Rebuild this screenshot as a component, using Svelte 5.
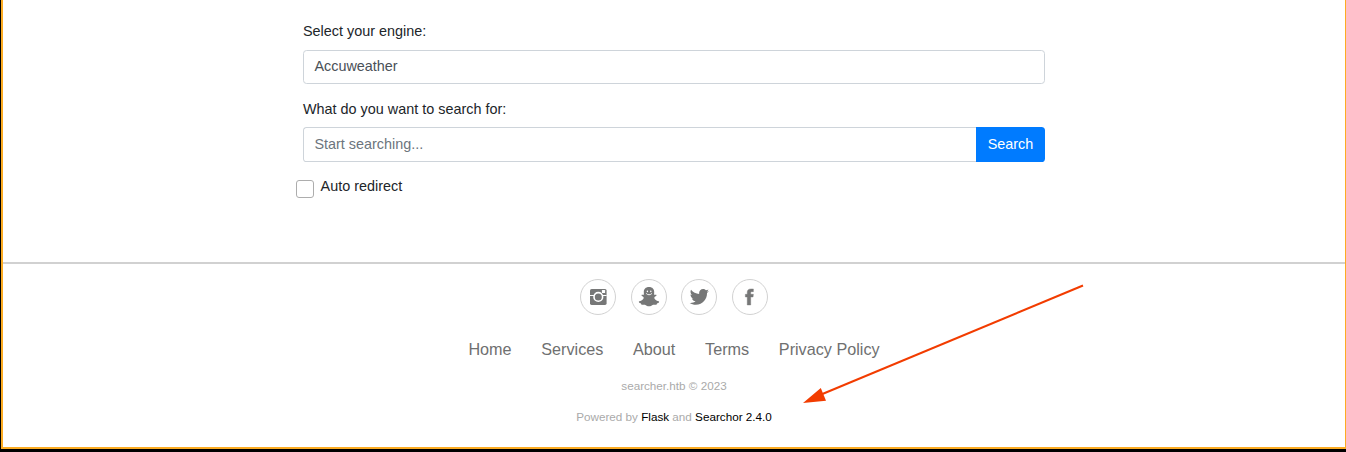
<script>
  const links = ['Home', 'Services', 'About', 'Terms', 'Privacy Policy'];
</script>

<div class="window">
  <main>
    <form>
      <label for="engine">Select your engine:</label>
      <div class="control select" id="engine">Accuweather</div>
      <label class="second" for="query">What do you want to search for:</label>
      <div class="group">
        <input id="query" class="control" type="text" placeholder="Start searching..." />
        <button type="button">Search</button>
      </div>
      <div class="check"><span class="box"></span><span>Auto redirect</span></div>
    </form>
  </main>
  <footer>
    <div class="social">
      <span class="circle">
        <svg viewBox="0 0 36 36">
          <rect x="10" y="9.900" width="16.600" height="16" rx="1.600" />
          <path class="gap" d="M10 16.500h4M22.200 16.500h4.400" />
          <circle class="ring" cx="18.300" cy="17.900" r="4.300" />
          <rect class="hole" x="21.900" y="11.100" width="3.200" height="3" rx=".5" />
        </svg>
      </span>
      <span class="circle">
        <svg viewBox="0 0 36 36">
          <path d="M18 8c-3.400 0-5.300 2.300-5.200 5.100l.1 2.700c-.9.300-2-.5-2.400.3-.4 1 1.900 1.500 2.200 2.300.2 1.500-1.900 3.200-4.300 3.900-.9.300-.6 1.300.3 1.600 1.800.6 1.200.6 1.700 1.700.5.600 2.700-.3 4 .3 1.200.7 2 1.300 3.600 1.300s2.400-.6 3.600-1.300c1.300-.6 3.500.3 4-.3.5-1.100-.1-1.100 1.700-1.700.9-.3 1.200-1.300.3-1.600-2.400-.7-4.500-2.400-4.300-3.900.3-.8 2.600-1.300 2.200-2.300-.4-.8-1.500 0-2.400-.3l.1-2.700C23.300 10.300 21.400 8 18 8z" />
          <ellipse class="hole" cx="16.400" cy="12.300" rx=".7" ry=".9" />
          <ellipse class="hole" cx="19.800" cy="12.300" rx=".7" ry=".9" />
          <path class="smile" d="M15.200 14.400c1.200 1.800 4.500 1.800 5.700 0" />
        </svg>
      </span>
      <span class="circle">
        <svg viewBox="0 0 36 36">
          <path transform="translate(7.900 7.500) scale(.0408)" d="M492 109.500c-17.400 7.700-36 12.900-55.600 15.300 20-12 35.400-31 42.600-53.600-18.700 11.100-39.400 19.200-61.500 23.500C399.800 75.800 374.600 64 346.800 64c-53.500 0-96.800 43.400-96.800 96.900 0 7.600.8 15 2.500 22.100-80.500-4-151.900-42.600-199.600-101.300-8.300 14.300-13.100 31-13.100 48.700 0 33.600 17.200 63.300 43.200 80.700-16-.4-31-4.800-44-12.100v1.200c0 47 33.400 86.100 77.700 95-8.100 2.200-16.700 3.400-25.500 3.400-6.200 0-12.300-.6-18.200-1.800 12.300 38.500 48.100 66.500 90.500 67.300-33.100 26-74.900 41.500-120.300 41.500-7.800 0-15.500-.5-23.100-1.400C62.800 432 113.800 448 168.500 448 346.600 448 444 300.300 444 172.200c0-4.200-.1-8.400-.3-12.500C462.600 146 479 129 492 109.500z" />
        </svg>
      </span>
      <span class="circle">
        <svg viewBox="0 0 36 36">
          <path transform="translate(6.700 7.300) scale(.0417)" stroke="#767777" stroke-width="10" d="M288 192v-38.100c0-17.200 3.800-25.900 30.500-25.900H352V64h-55.900c-68.500 0-91.100 31.400-91.100 85.300V192h-45v64h45v192h83V256h56.400l7.600-64h-64z" />
        </svg>
      </span>
    </div>
    <nav>
      {#each links as link}<span>{link}</span>{/each}
    </nav>
    <p class="copy">searcher.htb © 2023</p>
    <p class="powered">Powered by <b>Flask</b> and <b>Searchor 2.4.0</b></p>
  </footer>
  <svg class="arrow" viewBox="0 0 1346 452">
    <line x1="1083" y1="285.500" x2="820" y2="395" />
    <path d="M803 403l17.800-15 5.200 12.800z" />
  </svg>
</div>

<style>
  :global(body) { margin: 0; background: #000; }
  .window {
    position: relative;
    box-sizing: border-box;
    width: 1345px;
    height: 449px;
    margin-left: 1px;
    border: solid #fcac23;
    border-width: 0 1px 2px 2px;
    background: #fff;
    color: #212529;
    font: 14.4px/21.6px "Liberation Sans", Arial, sans-serif;
  }
  main { box-sizing: border-box; height: 262px; padding-top: 21px; }
  form { width: 742px; margin-left: 300px; }
  label { display: block; height: 22px; margin-bottom: 7px; }
  label.second { margin: 15px 0 6px; }
  .control {
    box-sizing: border-box;
    width: 100%;
    height: 34px;
    margin: 0;
    padding: 5px 10.400px;
    border: 1px solid #ced4da;
    border-radius: 3.600px;
    background: #fff;
    color: #495057;
    font: inherit;
  }
  .group { display: flex; height: 35px; }
  .group .control { flex: 1; width: auto; min-width: 0; height: 35px; padding: 4px 10.400px 6px; border-right: 0; border-radius: 3.600px 0 0 3.600px; }
  .control::placeholder { color: #6c757d; opacity: 1; }
  button {
    box-sizing: border-box;
    width: 69px;
    padding: 0;
    border: 0;
    border-radius: 0 3.600px 3.600px 0;
    background: #007bff;
    color: #fff;
    font: inherit;
  }
  .check { display: flex; gap: 6.600px; margin: 14px 0 0 -7px; }
  .box { box-sizing: border-box; width: 18px; height: 18px; margin-top: 4px; border: 1px solid #adadad; border-radius: 3px; }
  footer {
    display: flex;
    flex-direction: column;
    align-items: center;
    border-top: 2px solid #d1d1d1;
    padding-top: 15px;
    color: #6f7070;
  }
  .social { display: flex; gap: 14.600px; height: 36px; }
  .circle { box-sizing: border-box; width: 36px; height: 36px; border: 1px solid #d2d2d2; border-radius: 50%; }
  .circle svg { display: block; width: 36px; height: 36px; margin: -1px; fill: #767777; }
  .circle .hole { fill: #fff; }
  .circle .ring { stroke: #fff; stroke-width: 1.600; }
  .circle .gap { stroke: #fff; stroke-width: 1; }
  .circle .smile { fill: none; stroke: #fff; stroke-width: .9; }
  nav { display: flex; gap: 29.700px; margin-top: 22px; font-size: 16.200px; line-height: 24px; }
  p { margin: 0; color: #aaa; font-size: 11.700px; line-height: 18px; }
  .copy { margin-top: 16px; }
  .powered { margin-top: 13px; }
  b { color: #000; font-weight: 400; }
  .arrow { position: absolute; left: -3px; top: 0; width: 1346px; height: 452px; fill: #f23c00; pointer-events: none; }
  .arrow line { stroke: #f23c00; stroke-width: 2; }
</style>
